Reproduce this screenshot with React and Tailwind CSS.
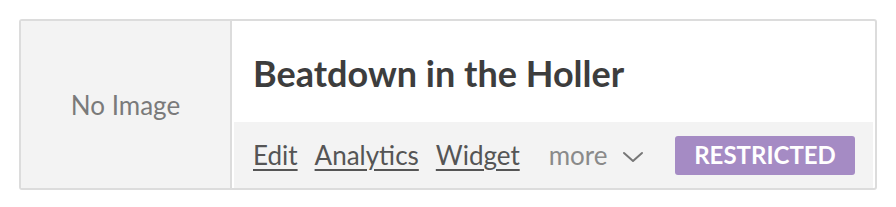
import React from "react";

const App = () => {
  return (
    <div className="w-[896px] h-[207px] bg-white pt-[19px] pl-[19px]" style={{ fontFamily: "Lato, 'Liberation Sans', sans-serif" }}>
      <div className="w-[858px] h-[171px] border-2 border-[#dcdcdc] rounded-[3px] flex overflow-hidden">
        {/* Image placeholder */}
        <div className="w-[211px] shrink-0 bg-[#f3f3f3] border-r-2 border-[#dcdcdc] flex items-center justify-center">
          <span className="text-[26px] text-[#7a7a7a] mt-[2px]">No Image</span>
        </div>

        {/* Content */}
        <div className="flex-1 flex flex-col">
          <div className="flex-1 flex items-center pl-[21px] pt-[2px]">
            <h2 className="text-[36px] font-bold text-[#3d3d3d] leading-none">
              Beatdown in the Holler
            </h2>
          </div>
          <div className="h-[66px] mx-[2px] bg-[#f3f3f3] flex items-center pl-[19px] pr-[18px]">
            <a className="text-[26px] text-[#555] underline underline-offset-[4px] decoration-2">Edit</a>
            <a className="ml-[17px] text-[26px] text-[#555] underline underline-offset-[4px] decoration-2">Analytics</a>
            <a className="ml-[17px] text-[26px] text-[#555] underline underline-offset-[4px] decoration-2">Widget</a>
            <span className="ml-[29px] text-[26px] text-[#8a8a8a]">more</span>
            <svg className="ml-[14px] mt-[3px]" width="22" height="12" viewBox="0 0 22 12" fill="none" stroke="#777" strokeWidth="2" strokeLinecap="round" strokeLinejoin="round">
              <path d="M2 2l9 8 9-8" />
            </svg>
            <span className="ml-auto w-[180px] h-[39px] rounded-[3px] bg-[#a58bc4] text-white font-bold text-[24px] flex items-center justify-center">
              RESTRICTED
            </span>
          </div>
        </div>
      </div>
    </div>
  );
};

export default App;
